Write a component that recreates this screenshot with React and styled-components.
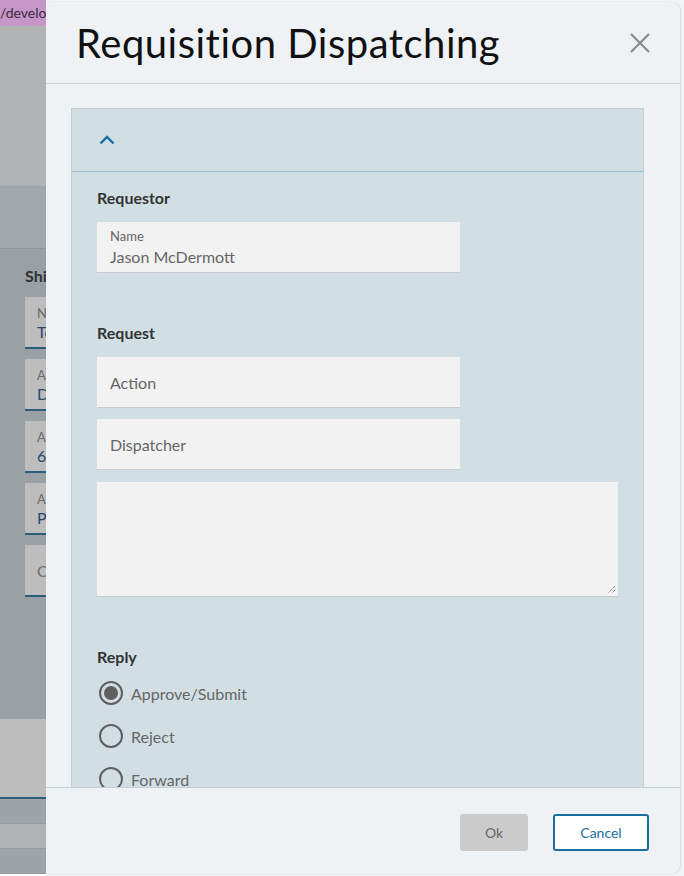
import React, { useState } from 'react'
import styled, { createGlobalStyle } from 'styled-components'

const GlobalStyle = createGlobalStyle`
  html, body {
    margin: 0;
    padding: 0;
    height: 100%;
    overflow: hidden;
    font-family: Lato, "Open Sans", "Liberation Sans", sans-serif;
  }
  * { box-sizing: border-box; }
`

/* ---------- page behind the dialog ---------- */

const BackPage = styled.div`
  width: 684px;
  height: 876px;
  display: flex;
  flex-direction: column;
  overflow: hidden;
`

const UrlBar = styled.div`
  height: 26px;
  background: #c696c8;
  color: #3b2a3d;
  font-size: 14px;
  line-height: 26px;
  padding-left: 0;
  white-space: nowrap;
`

const BackHeader = styled.div`
  height: 161px;
  background: #b1b2b4;
  border-bottom: 1px solid #9da3a6;
`

const BackToolbar = styled.div`
  height: 62px;
  background: #a1a7aa;
  border-bottom: 1px solid #8f9598;
`

const BackContent = styled.div`
  height: 470px;
  background: #9aa1a4;
  padding: 17px 0 0 25px;
`

const BackHeading = styled.div`
  font-size: 16px;
  font-weight: 700;
  color: #2e3234;
  margin-bottom: 12px;
`

const BackField = styled.div`
  width: 300px;
  height: 52px;
  background: #bdbdbd;
  border-bottom: 2px solid #2c5d7c;
  margin-bottom: 10px;
  padding: ${p => (p.$empty ? '0 12px' : '8px 12px')};
  display: flex;
  flex-direction: column;
  justify-content: ${p => (p.$empty ? 'center' : 'flex-start')};
  color: #6a6a6a;
  font-size: 13px;
  b {
    font-weight: 400;
    font-size: 16px;
    color: #24496a;
    margin-top: 1px;
  }
  i {
    font-style: normal;
    font-size: 16px;
    color: #6f6f6f;
  }
`

const BackFooter = styled.div`
  height: 80px;
  background: #bdbdbd;
  border-bottom: 2px solid #2c5d7c;
`

const BackRow = styled.div`
  height: 25px;
  background: ${p => (p.$light ? '#b0b1b3' : '#9ea4a7')};
  border-bottom: 1px solid #949a9d;
`

/* ---------- dialog ---------- */

const Sheet = styled.div`
  position: fixed;
  top: 0;
  left: 46px;
  right: 0;
  bottom: 0;
  background: #f3f4f5;
  padding: 2px 4px 2px 0;
`

const Dialog = styled.div`
  height: 100%;
  background: #eef2f5;
  border-radius: 0 9px 9px 0;
  box-shadow: 1px 0 2px rgba(0, 0, 0, 0.12);
  display: flex;
  flex-direction: column;
  overflow: hidden;
`

const Header = styled.div`
  height: 82px;
  flex: none;
  display: flex;
  align-items: center;
  justify-content: space-between;
  padding: 0 29px 0 30px;
  border-bottom: 1px solid #cdd3d7;
`

const Title = styled.h1`
  margin: 0;
  font-size: 40px;
  font-weight: 400;
  color: #111;
  letter-spacing: 0.5px;
`

const CloseButton = styled.button`
  border: 0;
  background: none;
  padding: 0;
  display: flex;
  cursor: pointer;
`

const Body = styled.div`
  flex: 1;
  overflow: hidden;
  padding: 24px 36px 0 25px;
`

const Panel = styled.div`
  background: #d1dfe4;
  border: 1px solid #c2ced3;
  border-bottom: 0;
`

const PanelHead = styled.div`
  height: 63px;
  display: flex;
  align-items: center;
  padding-left: 27px;
  border-bottom: 1px solid #8fc0cf;
  cursor: pointer;
`

const PanelContent = styled.div`
  padding: 16px 25px 40px;
`

const SectionTitle = styled.div`
  font-size: 16px;
  font-weight: 700;
  color: #333;
  line-height: 20px;
  margin-bottom: 14px;
  margin-top: ${p => p.$top || 0}px;
`

const Field = styled.div`
  width: ${p => p.$width || 363}px;
  height: ${p => p.$height || 50}px;
  background: #f2f2f2;
  box-shadow: 0 1px 0 #c9cbcc;
  margin-top: ${p => p.$top || 0}px;
  padding: 0 13px;
  display: flex;
  flex-direction: column;
  justify-content: center;
  position: relative;
`

const FieldLabel = styled.span`
  font-size: 13px;
  color: #666;
  line-height: 16px;
  margin-top: 1px;
`

const FieldValue = styled.span`
  font-size: 16px;
  color: #666;
  line-height: 20px;
  margin-top: 3px;
`

const Placeholder = styled.span`
  font-size: 16px;
  color: #666;
`

const Grip = styled.svg`
  position: absolute;
  right: 2px;
  bottom: 2px;
`

const RadioList = styled.div`
  display: flex;
  flex-direction: column;
  gap: 19px;
  margin-top: 1px;
`

const RadioRow = styled.label`
  display: flex;
  align-items: center;
  gap: 8px;
  height: 24px;
  padding-left: 2px;
  font-size: 16px;
  color: #666;
  cursor: pointer;
`

const RadioCircle = styled.span`
  width: 24px;
  height: 24px;
  border-radius: 50%;
  border: 2px solid #5f5f5f;
  display: flex;
  align-items: center;
  justify-content: center;
  flex: none;
  &::after {
    content: '';
    width: 14px;
    height: 14px;
    border-radius: 50%;
    background: #5f5f5f;
    display: ${p => (p.$on ? 'block' : 'none')};
  }
`

const Footer = styled.div`
  height: 87px;
  flex: none;
  border-top: 1px solid #c9d0d4;
  display: flex;
  align-items: center;
  justify-content: flex-end;
  gap: 25px;
  padding: 2px 31px 0 0;
`

const Button = styled.button`
  height: 37px;
  min-width: ${p => (p.$primary ? 68 : 96)}px;
  border-radius: 3px;
  font-family: inherit;
  font-size: 14px;
  cursor: pointer;
  background: ${p => (p.$primary ? '#cbcbcb' : '#fff')};
  color: ${p => (p.$primary ? '#666' : '#1b6ea0')};
  border: ${p => (p.$primary ? '0' : '2px solid #1b6ea0')};
`

const replies = ['Approve/Submit', 'Reject', 'Forward']

const App = () => {
  const [reply, setReply] = useState(0)

  return (
    <>
      <GlobalStyle />
      <BackPage>
        <UrlBar>/develop</UrlBar>
        <BackHeader />
        <BackToolbar />
        <BackContent>
          <BackHeading>Shipping</BackHeading>
          <BackField>Name<b>Tom</b></BackField>
          <BackField>Address<b>Dover St</b></BackField>
          <BackField>Address 2<b>6th floor</b></BackField>
          <BackField>Area<b>Perth</b></BackField>
          <BackField $empty><i>City</i></BackField>
        </BackContent>
        <BackFooter />
        <BackRow />
        <BackRow $light />
        <BackRow />
      </BackPage>

      <Sheet>
        <Dialog>
          <Header>
            <Title>Requisition Dispatching</Title>
            <CloseButton aria-label="Close">
              <svg width="22" height="22" viewBox="0 0 22 22">
                <path d="M2 2 L20 20 M20 2 L2 20" stroke="#8a8a8a" strokeWidth="2.2" />
              </svg>
            </CloseButton>
          </Header>

          <Body>
            <Panel>
              <PanelHead>
                <svg width="16" height="10" viewBox="0 0 16 10">
                  <path d="M1.5 8.5 L8 2 L14.5 8.5" fill="none" stroke="#1b6ea0" strokeWidth="2.4" />
                </svg>
              </PanelHead>
              <PanelContent>
                <SectionTitle>Requestor</SectionTitle>
                <Field>
                  <FieldLabel>Name</FieldLabel>
                  <FieldValue>Jason McDermott</FieldValue>
                </Field>

                <SectionTitle $top={51}>Request</SectionTitle>
                <Field><Placeholder>Action</Placeholder></Field>
                <Field $top={12}><Placeholder>Dispatcher</Placeholder></Field>
                <Field $top={13} $width={521} $height={114}>
                  <Grip width="10" height="10" viewBox="0 0 10 10">
                    <path d="M9 2 L2 9 M9 6 L6 9" stroke="#555" strokeWidth="1" strokeDasharray="1 1" />
                  </Grip>
                </Field>

                <SectionTitle $top={51}>Reply</SectionTitle>
                <RadioList>
                  {replies.map((r, i) => (
                    <RadioRow key={r} onClick={() => setReply(i)}>
                      <RadioCircle $on={reply === i} />
                      {r}
                    </RadioRow>
                  ))}
                </RadioList>
              </PanelContent>
            </Panel>
          </Body>

          <Footer>
            <Button $primary>Ok</Button>
            <Button>Cancel</Button>
          </Footer>
        </Dialog>
      </Sheet>
    </>
  )
}

export default App
